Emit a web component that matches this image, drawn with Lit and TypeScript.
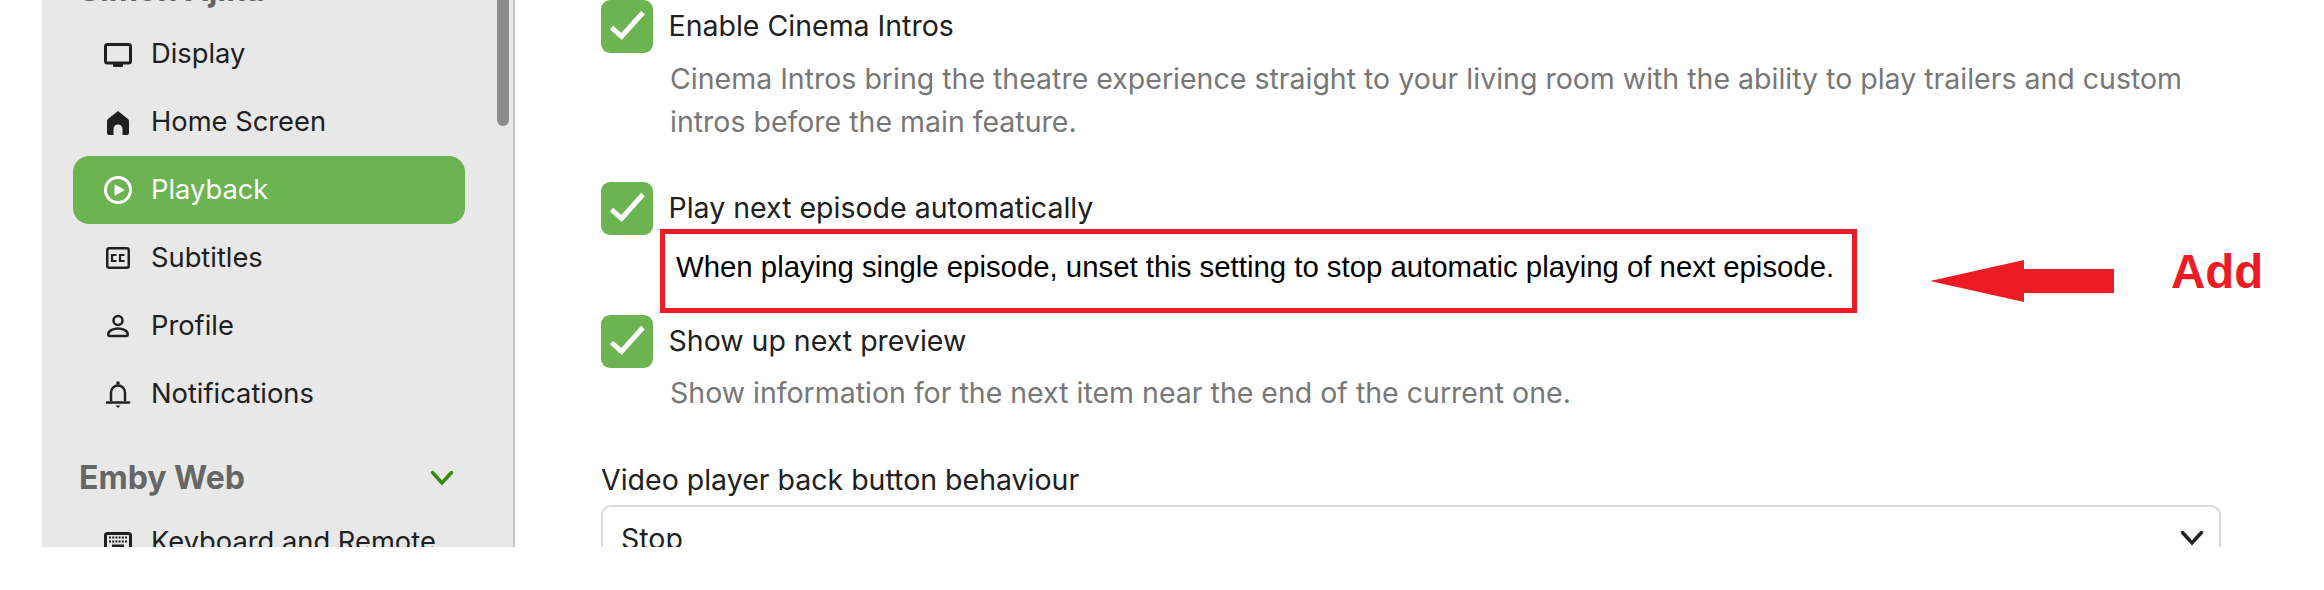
import { LitElement, html, css, svg } from "lit";
import { customElement } from "lit/decorators.js";

const ICONS: Record<string, unknown> = {
  display: svg`<rect x="3.5" y="6.5" width="25" height="18.5" rx="2" fill="none" stroke="currentColor" stroke-width="3"/><path d="M11 26h10v2a1 1 0 0 1-1 1h-8a1 1 0 0 1-1-1z" fill="currentColor"/>`,
  home: svg`<path d="M16 5 26 13q1 1 1 2V27q0 2-2 2H20.500V23a4.500 4.500 0 0 0-9 0V29H7q-2 0-2-2V15q0-1 1-2Z" fill="currentColor"/>`,
  play: svg`<circle cx="16" cy="16" r="12.500" fill="none" stroke="currentColor" stroke-width="3"/><path d="M12.500 11.500a.8.8 0 0 1 1.200-.7l8 4.500a.8.8 0 0 1 0 1.400l-8 4.500a.8.8 0 0 1-1.200-.7z" fill="currentColor"/>`,
  cc: svg`<rect x="5.250" y="6.250" width="21.500" height="19.500" rx="2" fill="none" stroke="currentColor" stroke-width="2.500"/><path d="M14.500 13h-4.500v6h4.500M22.500 13h-4.500v6h4.500" fill="none" stroke="currentColor" stroke-width="2.200"/>`,
  profile: svg`<circle cx="16" cy="10.500" r="4.500" fill="none" stroke="currentColor" stroke-width="2.500"/><path d="M6.300 24c0-3.500 5.700-5.500 9.700-5.500s9.700 2 9.700 5.500v.5q0 1.500-1.500 1.500H7.800q-1.500 0-1.500-1.500Z" fill="none" stroke="currentColor" stroke-width="2.500"/>`,
  bell: svg`<path d="M9 23V14.500a7 7 0 0 1 14 0V23" fill="none" stroke="currentColor" stroke-width="2.500"/><path d="M5 24.500H27" fill="none" stroke="currentColor" stroke-width="2.500" stroke-linecap="round"/><circle cx="16" cy="5" r="1.800" fill="currentColor"/><path d="M13.500 27.500h5l-2.500 2.500z" fill="currentColor"/>`,
  keyboard: svg`<rect x="3.500" y="7.500" width="25" height="22" rx="2" fill="none" stroke="currentColor" stroke-width="3"/><path d="M7 11.500H25M7 15.500H25" fill="none" stroke="currentColor" stroke-width="2.200" stroke-dasharray="2 1.200"/><rect x="10" y="18.500" width="12" height="2.500" fill="currentColor"/>`,
};

const NAV_TOP = [
  { id: "display", label: "Display" },
  { id: "home", label: "Home Screen" },
  { id: "play", label: "Playback", active: true },
  { id: "cc", label: "Subtitles" },
  { id: "profile", label: "Profile" },
  { id: "bell", label: "Notifications" },
];

@customElement("app-root")
export class AppRoot extends LitElement {
  static styles = css`
    :host {
      display: block;
      width: 2324px;
      height: 590px;
      background: #fff;
      font-family: Inter, "Liberation Sans", sans-serif;
      color: #202020;
    }
    .frame {
      position: relative;
      display: flex;
      height: 547px;
      overflow: hidden;
    }
    .sidebar {
      position: relative;
      flex: none;
      box-sizing: border-box;
      width: 473px;
      margin-left: 42px;
      background: #e8e8e8;
      border-right: 2px solid #c4c4c4;
    }
    .sideInner {
      margin-top: -60px;
    }
    .scroll {
      position: absolute;
      top: 0;
      right: 4px;
      width: 12px;
      height: 126px;
      background: #8c8c8c;
      border-radius: 0 0 6px 6px;
    }
    .head {
      display: flex;
      align-items: center;
      justify-content: space-between;
      box-sizing: border-box;
      height: 80px;
      padding: 20px 55px 0 37px;
      font-size: 32px;
      font-weight: 700;
      color: #666;
    }
    .head span {
      padding-bottom: 2px;
    }
    .head svg {
      width: 32px;
      height: 32px;
      color: #338a0c;
    }
    .item {
      display: flex;
      align-items: center;
      gap: 17px;
      box-sizing: border-box;
      width: 392px;
      height: 68px;
      margin-left: 31px;
      padding-left: 29px;
      border-radius: 16px;
      font-size: 27.300px;
    }
    .item span {
      padding-bottom: 2px;
    }
    .item svg {
      flex: none;
      width: 32px;
      height: 32px;
    }
    .item.active {
      background: #6cb352;
      color: #fff;
    }
    .main {
      flex: none;
      width: 1620px;
      margin-left: 86px;
    }
    .check {
      display: flex;
      align-items: center;
      gap: 15.500px;
      font-size: 28.500px;
    }
    .check span {
      padding-bottom: 2px;
    }
    .box {
      flex: none;
      width: 52px;
      height: 53px;
      border-radius: 9px;
      background: #6cb352;
    }
    .box svg {
      display: block;
      width: 52px;
      height: 53px;
    }
    .desc {
      margin: 3.500px 0 0 69px;
      font-size: 28.500px;
      line-height: 43px;
      color: #777;
    }
    .r1 { margin-bottom: 39.500px; }
    .callout {
      display: flex;
      align-items: center;
      box-sizing: border-box;
      width: 1197px;
      height: 84px;
      margin: -6px 0 1.500px 59px;
      padding: 0 0 8px 11px;
      border: 5px solid #ed1c24;
      font-family: "Liberation Sans", Arial, sans-serif;
      font-size: 29.350px;
      color: #000;
    }
    .fieldLabel {
      margin-top: 44px;
      font-size: 28.500px;
      line-height: 43px;
    }
    .select {
      display: flex;
      align-items: center;
      justify-content: space-between;
      box-sizing: border-box;
      height: 67px;
      margin-top: 3.500px;
      padding: 0 11px 0 18px;
      border: 2px solid #d9d9d9;
      border-radius: 10px;
      font-size: 28.500px;
    }
    .select svg {
      width: 32px;
      height: 32px;
    }
    .arrow {
      position: absolute;
      left: 1925px;
      top: 255px;
      width: 195px;
      height: 52px;
    }
    .add {
      position: absolute;
      left: 2171px;
      top: 245px;
      font-family: "Liberation Sans", Arial, sans-serif;
      font-size: 47.500px;
      line-height: 54px;
      font-weight: 700;
      color: #ed1c24;
    }
  `;

  private icon(id: string) {
    return html`<svg viewBox="0 0 32 32">${ICONS[id]}</svg>`;
  }

  private navItem(n: { id: string; label: string; active?: boolean }) {
    return html`<div class="item ${n.active ? "active" : ""}">
      ${this.icon(n.id)}<span>${n.label}</span>
    </div>`;
  }

  private check(label: string) {
    return html`<div class="check">
      <div class="box">
        <svg viewBox="0 0 52 53">
          <path d="M10.500 27.500 20.500 36.500 42 12.500" fill="none" stroke="#fff" stroke-width="5" />
        </svg>
      </div>
      <span>${label}</span>
    </div>`;
  }

  render() {
    const chevron = html`<svg viewBox="0 0 32 32">
      <path d="M6.500 10.500 16 21l9.500-10.500" fill="none" stroke="currentColor" stroke-width="3.500" stroke-linecap="round" />
    </svg>`;
    return html`<div class="frame">
      <aside class="sidebar">
        <div class="sideInner">
          <div class="head"><span>Simon Ajina</span></div>
          ${NAV_TOP.map((n) => this.navItem(n))}
          <div class="head"><span>Emby Web</span>${chevron}</div>
          ${this.navItem({ id: "keyboard", label: "Keyboard and Remote" })}
        </div>
        <div class="scroll"></div>
      </aside>
      <main class="main">
        ${this.check("Enable Cinema Intros")}
        <div class="desc r1">
          Cinema Intros bring the theatre experience straight to your living room with the ability to play trailers and custom<br />intros before the main feature.
        </div>
        ${this.check("Play next episode automatically")}
        <div class="callout">When playing single episode, unset this setting to stop automatic playing of next episode.</div>
        ${this.check("Show up next preview")}
        <div class="desc">Show information for the next item near the end of the current one.</div>
        <div class="fieldLabel">Video player back button behaviour</div>
        <div class="select"><span>Stop</span>${chevron}</div>
      </main>
      <svg class="arrow" viewBox="0 0 195 52">
        <path d="M5 26 99 5V14H189V38H99V47Z" fill="#ed1c24" />
      </svg>
      <div class="add">Add</div>
    </div>`;
  }
}
